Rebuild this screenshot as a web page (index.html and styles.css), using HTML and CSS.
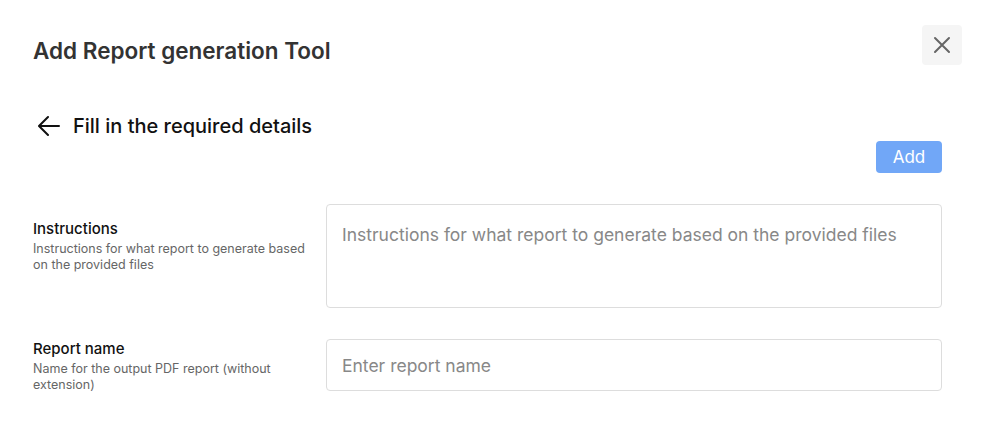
FILE: index.html
```html
<!DOCTYPE html>
<html lang="en">
<head>
  <meta charset="UTF-8" />
  <meta name="viewport" content="width=device-width, initial-scale=1.0" />
  <title>Add Report generation Tool</title>
  <link rel="stylesheet" href="styles.css">
</head>
<body>
  <div class="dialog">
    <header class="dialog-head">
      <h2>Add Report generation Tool</h2>
      <button class="close-btn" aria-label="Close">
        <svg width="18" height="18" viewBox="0 0 18 18" fill="none" stroke="currentColor" stroke-width="2" stroke-linecap="round">
          <path d="M2 2l14 14M16 2L2 16" />
        </svg>
      </button>
    </header>

    <main class="dialog-body">
      <div class="step-title">
        <svg class="back-icon" width="22" height="22" viewBox="0 0 22 22" fill="none" stroke="currentColor" stroke-width="2" stroke-linecap="round" stroke-linejoin="round">
          <path d="M21 11H2M10 2l-9 9 9 9" />
        </svg>
        <span>Fill in the required details</span>
      </div>

      <div class="actions">
        <button class="add-btn">Add</button>
      </div>

      <form class="fields">
        <div class="field">
          <div class="field-info field-info--tall">
            <label for="instructions">Instructions</label>
            <p>Instructions for what report to generate based on the provided files</p>
          </div>
          <textarea id="instructions" placeholder="Instructions for what report to generate based on the provided files"></textarea>
        </div>

        <div class="field">
          <div class="field-info">
            <label for="report-name">Report name</label>
            <p>Name for the output PDF report (without extension)</p>
          </div>
          <input type="text" id="report-name" placeholder="Enter report name" />
        </div>
      </form>
    </main>
  </div>
</body>
</html>
```

FILE: styles.css
```css
* {
  box-sizing: border-box;
  margin: 0;
  padding: 0;
}

body {
  font-family: Inter, "Noto Sans", sans-serif;
  background: #fff;
  color: #111;
}

.dialog {
  padding: 25px 25px 0 33px;
}

/* Header */
.dialog-head {
  display: flex;
  justify-content: space-between;
  align-items: flex-start;
}

.dialog-head h2 {
  margin-top: 12px;
  font-size: 22.5px;
  line-height: 28px;
  font-weight: 600;
  color: #333;
}

.close-btn {
  width: 40px;
  height: 40px;
  border: none;
  border-radius: 4px;
  background: #f5f5f5;
  color: #666;
  display: flex;
  align-items: center;
  justify-content: center;
  cursor: pointer;
}

.dialog-body {
  padding-right: 20px;
}

/* Step title */
.step-title {
  margin-top: 47px;
  height: 28px;
  display: flex;
  align-items: center;
  gap: 13px;
  padding-left: 5px;
  font-size: 20px;
  font-weight: 500;
  color: #111;
}

.back-icon {
  color: #111;
}

.actions {
  display: flex;
  justify-content: flex-end;
  margin-top: 1px;
}

.add-btn {
  width: 66px;
  height: 32px;
  border: none;
  border-radius: 4px;
  background: #71a7f7;
  color: #fff;
  font-family: inherit;
  font-size: 17px;
  cursor: pointer;
}

/* Form fields */
.fields {
  margin-top: 31px;
  display: flex;
  flex-direction: column;
  gap: 31px;
}

.field {
  display: grid;
  grid-template-columns: 277px 1fr;
  column-gap: 16px;
  align-items: start;
}

.field-info--tall {
  padding-top: 15px;
}

.field-info label {
  display: block;
  font-size: 15px;
  line-height: 20px;
  font-weight: 500;
  color: #111;
}

.field-info p {
  margin-top: 2px;
  font-size: 12.5px;
  line-height: 16px;
  color: #666;
}

.field textarea,
.field input {
  width: 100%;
  border: 1px solid #ddd;
  border-radius: 4px;
  font-family: inherit;
  font-size: 17.5px;
  line-height: 24px;
  color: #111;
  background: #fff;
  outline: none;
}

.field textarea {
  height: 104px;
  padding: 18px 15px;
  resize: none;
}

.field input {
  height: 52px;
  padding: 0 15px;
}

.field textarea::placeholder,
.field input::placeholder {
  color: #888;
}
```
